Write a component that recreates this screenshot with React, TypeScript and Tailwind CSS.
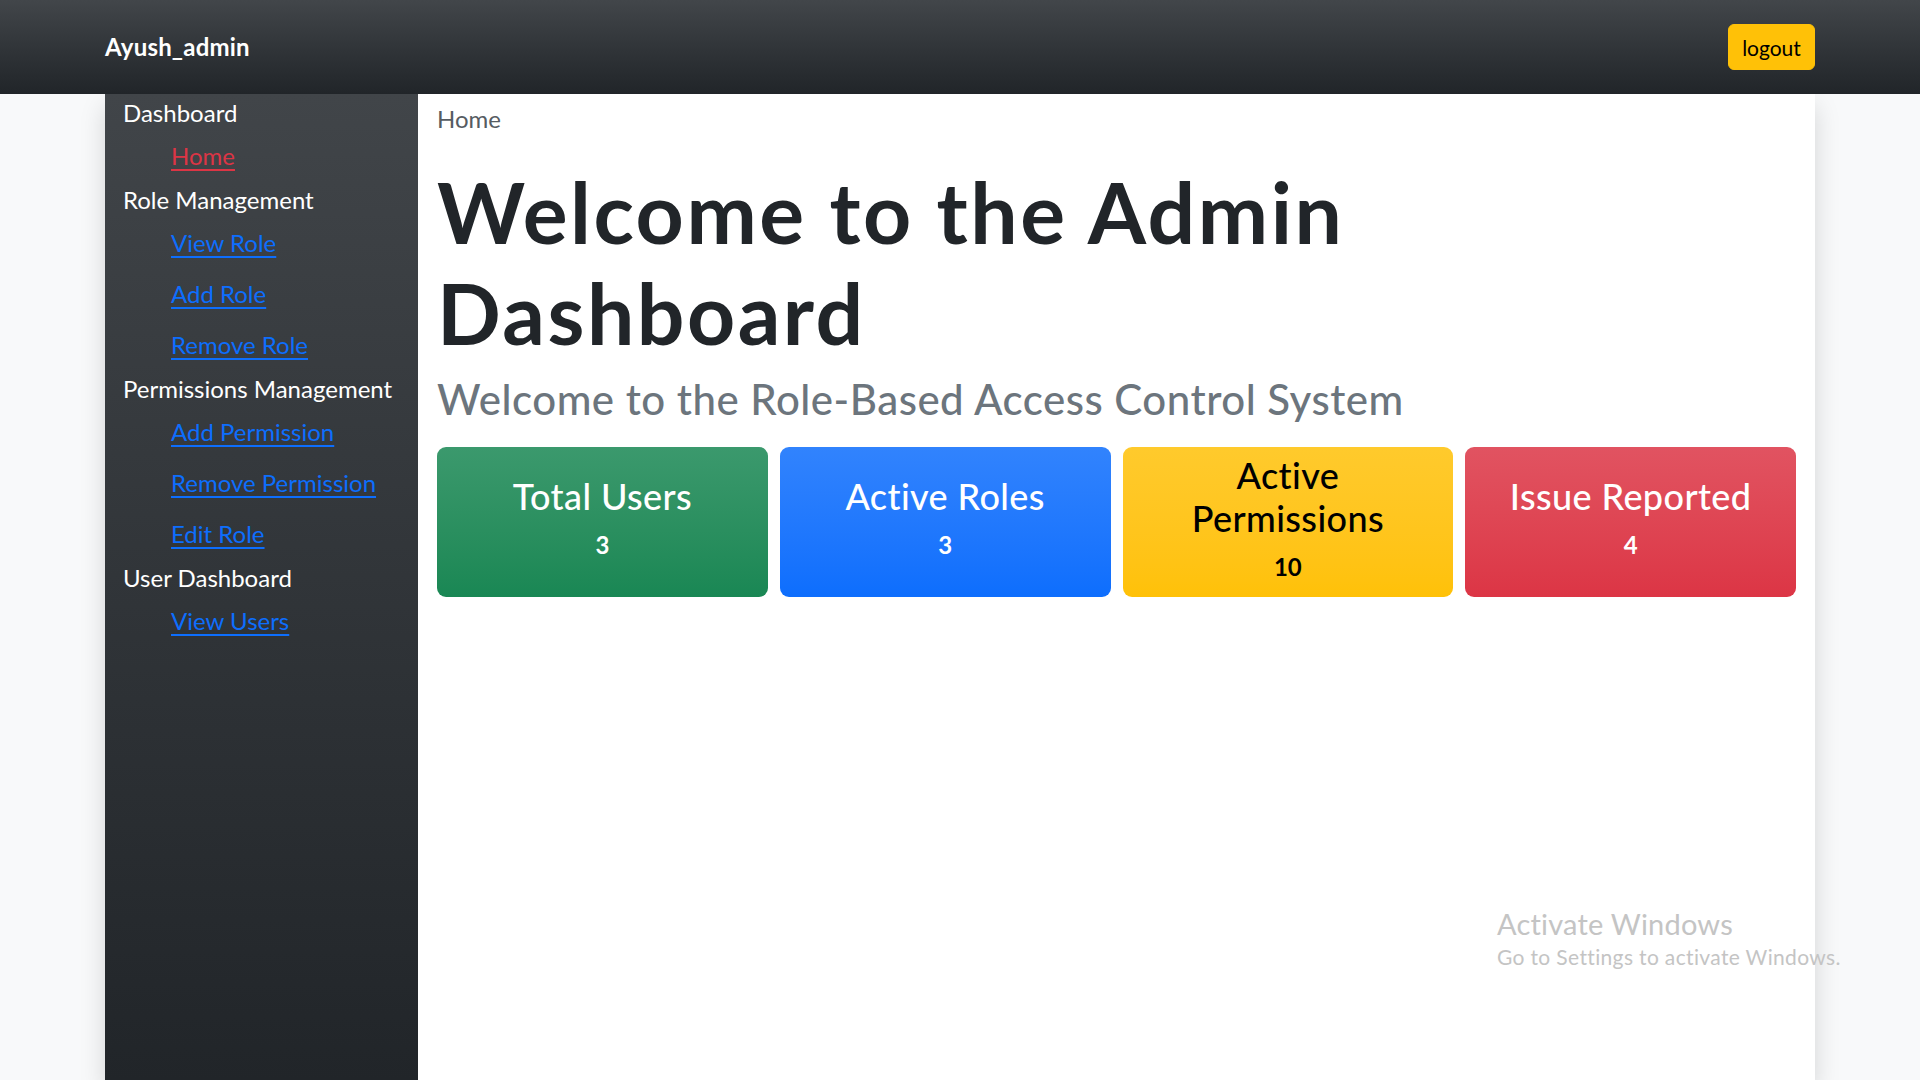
import React from "react";

// Sidebar navigation groups
interface NavGroup {
    title: string;
    links: { label: string; active?: boolean }[];
}

const navGroups: NavGroup[] = [
    { title: "Dashboard", links: [{ label: "Home", active: true }] },
    { title: "Role Management", links: [{ label: "View Role" }, { label: "Add Role" }, { label: "Remove Role" }] },
    {
        title: "Permissions Management",
        links: [{ label: "Add Permission" }, { label: "Remove Permission" }, { label: "Edit Role" }],
    },
    { title: "User Dashboard", links: [{ label: "View Users" }] },
];

interface StatCard {
    title: string;
    value: number;
    className: string;
}

const stats: StatCard[] = [
    { title: "Total Users", value: 3, className: "from-[#3b996d] to-[#198754] text-white" },
    { title: "Active Roles", value: 3, className: "from-[#3183fd] to-[#0d6efd] text-white" },
    { title: "Active Permissions", value: 10, className: "from-[#ffca2c] to-[#ffc107] text-black" },
    { title: "Issue Reported", value: 4, className: "from-[#e15361] to-[#dc3545] text-white" },
];

const App: React.FC = () => {
    return (
        <div className="relative h-screen overflow-hidden bg-[#f8f9fa] flex flex-col font-['Lato',sans-serif]">
            {/* Top navbar */}
            <nav className="relative z-10 h-[94px] shrink-0 bg-linear-to-b from-[#42464a] to-[#212529]">
                <div className="w-[1710px] mx-auto h-full flex items-center justify-between">
                    <span className="text-white text-[24px] font-bold leading-[36px] tracking-[0.2px]">Ayush_admin</span>
                    <button className="h-[46px] w-[87px] flex items-center justify-center bg-[#ffc107] border border-[#ffc107] rounded-[6px] text-black text-[21px] leading-[31px]">
                        logout
                    </button>
                </div>
            </nav>

            <div className="flex-1 min-h-0 w-[1710px] mx-auto flex shadow-[0_12px_24px_rgba(0,0,0,0.15)]">
                {/* Sidebar */}
                <aside className="w-[313px] shrink-0 bg-linear-to-b from-[#414549] to-[#212529] pl-[18px] pt-[1px]">
                    {navGroups.map((group) => (
                        <div key={group.title}>
                            <div className="text-white text-[24px] leading-[36px]">{group.title}</div>
                            <ul className="pl-[48px] pt-[7px] pb-[8px] flex flex-col gap-[15px]">
                                {group.links.map((link) => (
                                    <li key={link.label} className="text-[24px] leading-[36px]">
                                        <a
                                            href="#"
                                            className={
                                                link.active
                                                    ? "text-[#dc3545] underline decoration-[1.5px] underline-offset-[4px]"
                                                    : "text-[#0d6efd] underline decoration-[1.5px] underline-offset-[4px]"
                                            }
                                        >
                                            {link.label}
                                        </a>
                                    </li>
                                ))}
                            </ul>
                        </div>
                    ))}
                </aside>

                {/* Main content */}
                <main className="flex-1 bg-white px-[19px] pt-[7px]">
                    <div className="text-[24px] leading-[36px] text-[#565c62]">Home</div>
                    <h1 className="mt-[25px] text-[84px] leading-[1.2] font-bold tracking-[2.5px] text-[#212529]">
                        Welcome to the Admin
                        <br />
                        Dashboard
                    </h1>
                    <h3 className="mt-[10px] text-[42px] leading-[1.2] font-medium tracking-[0.5px] text-[#6c757d]">
                        Welcome to the Role-Based Access Control System
                    </h3>

                    <div className="mt-[23px] grid grid-cols-4 gap-[12px]">
                        {stats.map((card) => (
                            <div
                                key={card.title}
                                className={`h-[150px] rounded-[9px] bg-linear-to-b px-[24px] pb-[5px] flex flex-col items-center justify-center text-center ${card.className}`}
                            >
                                <div className="text-[36px] leading-[43px] font-medium tracking-[0.4px]">{card.title}</div>
                                <div className="mt-[9px] text-[24px] leading-[36px] font-bold">{card.value}</div>
                            </div>
                        ))}
                    </div>
                </main>
            </div>

            {/* OS activation watermark */}
            <div className="absolute left-[1497px] top-[905px] text-[#c4c4c4] pointer-events-none">
                <div className="text-[29px] leading-[38px] tracking-[0.2px]">Activate Windows</div>
                <div className="text-[21px] leading-[28px] tracking-[0.35px]">Go to Settings to activate Windows.</div>
            </div>
        </div>
    );
};

export default App;
